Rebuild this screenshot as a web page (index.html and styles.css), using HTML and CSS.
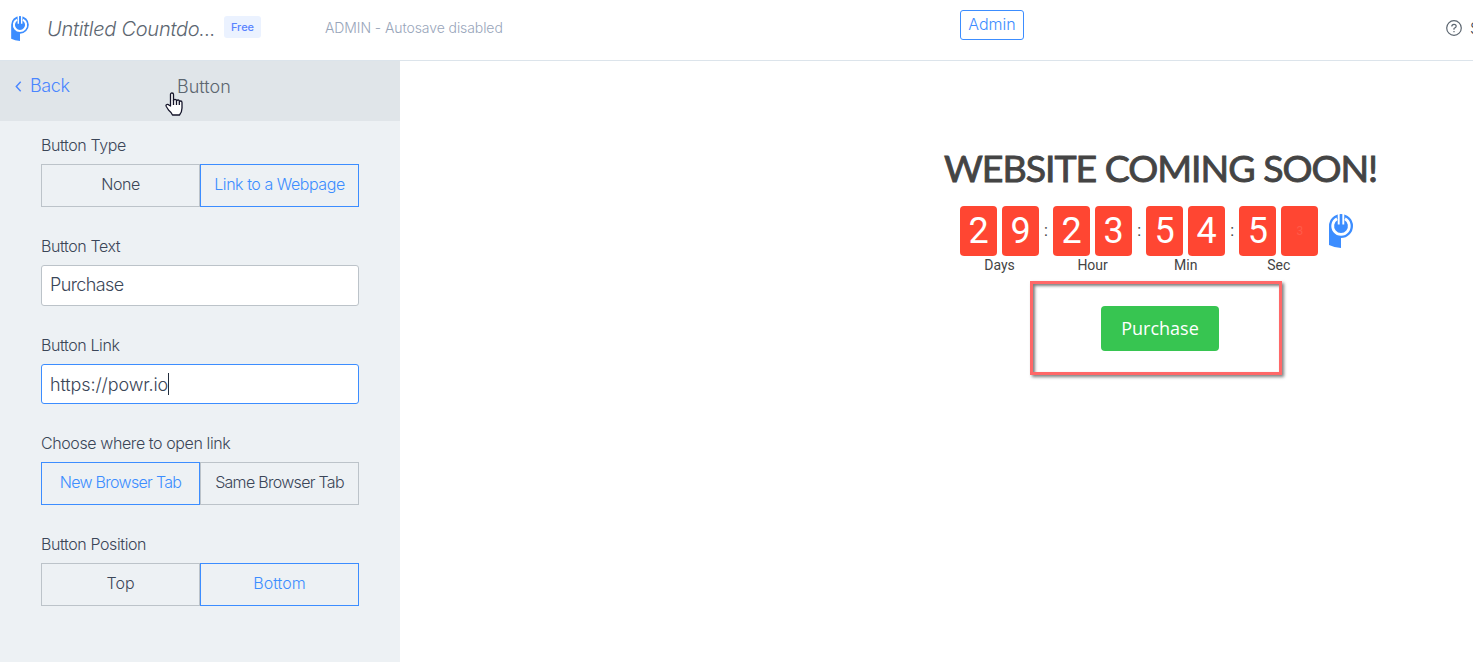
FILE: index.html
```html
<!DOCTYPE html>
<html lang="en">
<head>
    <meta charset="UTF-8">
    <meta name="viewport" content="width=device-width, initial-scale=1.0">
    <title>Countdown Timer Editor</title>
    <link rel="stylesheet" href="styles.css">
</head>
<body>
    <!-- Top bar -->
    <header class="topbar">
        <svg class="logo" viewBox="0 0 24 34">
            <path d="M0 12A12 12 0 1 1 12 24V34Q5 33.500 0 31Z" fill="#3c8dff"/>
            <path d="M8 4.800A8.300 8.300 0 1 0 16 4.800" fill="none" stroke="#fff" stroke-width="2.800"/>
            <path d="M9.700 0V10.500M14.300 0V10.500" stroke="#fff" stroke-width="1.900"/>
        </svg>
        <span class="app-name">Untitled Countdo...</span>
        <span class="plan">Free</span>
        <span class="autosave">ADMIN - Autosave disabled</span>
        <a class="admin-btn" href="#">Admin</a>
        <a class="support" href="#">
            <svg viewBox="0 0 16 16" fill="none" stroke="#5c6670" stroke-width="1.200">
                <circle cx="8" cy="8" r="7.300"/>
                <path d="M5.800 6.400Q5.800 4.300 8 4.300T10.200 6.300Q10.200 7.400 8 8.500V9.700M8 11V12.300"/>
            </svg>
            <span>S</span>
        </a>
    </header>

    <div class="editor">
        <!-- Settings panel -->
        <aside class="panel">
            <div class="panel-header">
                <a class="back" href="#">
                    <svg viewBox="0 0 6 10"><path d="M5 .7L1 5L5 9.300" fill="none" stroke="#4a86ff" stroke-width="1.300"/></svg>
                    <span>Back</span>
                </a>
                <span class="panel-title">Button</span>
                <svg class="pointer" viewBox="0 0 18 24" fill="#fff" stroke="#15152a" stroke-width="1.300" stroke-linejoin="round">
                    <path d="M5.500 14V2.500Q5.500 1 7 1T8.500 2.500V8.500Q8.500 7.300 10 7.300T11.500 9Q11.500 8 13 8T14.300 9.700Q14.500 9 15.700 9T17 10.500V16Q17 20 14.500 23H7.500Q6 20 3.500 18L1.300 14.500Q.5 13 1.800 12.500T4.200 13.200Z"/>
                    <path d="M8.500 8V13M11.500 9V13M14.300 10V13" fill="none"/>
                </svg>
            </div>

            <form class="fields">
                <div class="field">
                    <label>Button Type</label>
                    <div class="toggle">
                        <span class="option">None</span>
                        <span class="option active">Link to a Webpage</span>
                    </div>
                </div>
                <div class="field">
                    <label>Button Text</label>
                    <div class="text-input">Purchase</div>
                </div>
                <div class="field">
                    <label>Button Link</label>
                    <div class="text-input focused">https://powr.io<i class="caret"></i></div>
                </div>
                <div class="field">
                    <label>Choose where to open link</label>
                    <div class="toggle narrow">
                        <span class="option active">New Browser Tab</span>
                        <span class="option">Same Browser Tab</span>
                    </div>
                </div>
                <div class="field">
                    <label>Button Position</label>
                    <div class="toggle wide">
                        <span class="option">Top</span>
                        <span class="option active">Bottom</span>
                    </div>
                </div>
            </form>
        </aside>

        <!-- Countdown preview -->
        <main class="preview">
            <h1>WEBSITE COMING SOON!</h1>
            <div class="countdown">
                <div class="unit">
                    <div class="digits"><b>2</b><b>9</b></div>
                    <span>Days</span>
                </div>
                <i class="colon">:</i>
                <div class="unit">
                    <div class="digits"><b>2</b><b>3</b></div>
                    <span>Hour</span>
                </div>
                <i class="colon">:</i>
                <div class="unit">
                    <div class="digits"><b>5</b><b>4</b></div>
                    <span>Min</span>
                </div>
                <i class="colon">:</i>
                <div class="unit">
                    <div class="digits"><b>5</b><b class="flipping">3</b></div>
                    <span>Sec</span>
                </div>
                <svg class="badge" viewBox="0 0 24 34">
                    <path d="M0 12A12 12 0 1 1 12 24V34Q5 33.500 0 31Z" fill="#3c8dff"/>
                    <path d="M8 4.800A8.300 8.300 0 1 0 16 4.800" fill="none" stroke="#fff" stroke-width="2.800"/>
                    <path d="M9.700 0V10.500M14.300 0V10.500" stroke="#fff" stroke-width="1.900"/>
                </svg>
            </div>
            <div class="highlight">
                <a class="purchase" href="#">Purchase</a>
            </div>
        </main>
    </div>
</body>
</html>
```
FILE: styles.css
```css
* {
    box-sizing: border-box;
}

body {
    margin: 0;
    height: 662px;
    overflow: hidden;
    background-color: #fff;
    font-family: Inter, "Liberation Sans", sans-serif;
    font-weight: 300;
    color: #3b4658;
}

a {
    color: #3c8dff;
    text-decoration: none;
}

svg {
    display: block;
    flex: none;
}

/* Top bar */
.topbar {
    display: flex;
    align-items: flex-start;
    height: 61px;
    padding-left: 11px;
    border-bottom: 1px solid #dce4eb;
    overflow: hidden;
    white-space: nowrap;
}

.topbar > * {
    flex: none;
}

.logo {
    width: 18px;
    height: 25px;
    margin-top: 16px;
}

.app-name {
    width: 177px;
    margin-left: 18px;
    font-size: 20px;
    line-height: 24px;
    margin-top: 17px;
    font-style: italic;
    letter-spacing: -0.260px;
    color: #5c6670;
}

.plan {
    width: 37px;
    height: 22px;
    margin-top: 16px;
    border-radius: 3px;
    background-color: #ebf2ff;
    color: #5a84ff;
    font-size: 11px;
    font-weight: 500;
    line-height: 22px;
    text-align: center;
}

.autosave {
    width: 635px;
    margin: 18px 0 0 64px;
    font-size: 14px;
    line-height: 20px;
    letter-spacing: -0.080px;
    color: #98a5ba;
}

.admin-btn {
    width: 64px;
    height: 30px;
    margin-top: 10px;
    border: 1px solid #3c8dff;
    border-radius: 3px;
    font-size: 16px;
    line-height: 27px;
    text-align: center;
}

.support {
    display: flex;
    gap: 8px;
    margin: 20px 0 0 422px;
    font-size: 16px;
    line-height: 16px;
    color: #3b4658;
}

.support svg {
    width: 16px;
    height: 16px;
}

.editor {
    display: flex;
    height: 601px;
}

/* Settings panel */
.panel {
    width: 400px;
    background-color: #edf1f4;
}

.panel-header {
    position: relative;
    display: flex;
    height: 60px;
    padding: 14px 0 0 15px;
    background-color: #e0e5e9;
    font-size: 18px;
    line-height: 24px;
}

.back {
    display: flex;
    align-items: center;
    gap: 8px;
    width: 162px;
    height: 24px;
    color: #4a86ff;
    margin-top: -1px;
    letter-spacing: -0.400px;
}

.back svg {
    width: 7px;
    height: 11px;
    margin-top: 1px;
}

.panel-title {
    color: #5c6670;
}

.pointer {
    position: absolute;
    left: 165px;
    top: 31px;
    width: 18px;
    height: 24px;
}

.fields {
    padding: 15px 41px 0;
}

.field {
    margin-bottom: 30px;
}

.field label {
    display: block;
    margin-bottom: 9px;
    font-size: 16px;
    line-height: 19px;
    letter-spacing: -0.400px;
}

.toggle {
    display: flex;
    letter-spacing: -0.450px;
}

.toggle.narrow {
    letter-spacing: -0.700px;
}

.toggle.wide {
    letter-spacing: 0;
}

.option {
    flex: 1;
    height: 43px;
    border: 1px solid #bcc3c9;
    font-size: 16px;
    line-height: 39px;
    text-align: center;
    white-space: nowrap;
}

.option.active {
    border-color: #3c8dff;
    color: #3c8dff;
}

.text-input {
    display: flex;
    align-items: center;
    height: 41px;
    padding: 0 0 2px 8px;
    border: 1px solid #bcc3c9;
    border-radius: 3px;
    background-color: #fff;
    font-size: 18px;
    letter-spacing: -0.600px;
}

.text-input.focused {
    height: 40px;
    padding-bottom: 0;
    border-color: #3c8dff;
    letter-spacing: -0.120px;
}

.caret {
    width: 1px;
    height: 22px;
    background-color: #222c3c;
}

/* Countdown preview */
.preview {
    flex: 1;
    display: flex;
    flex-direction: column;
    align-items: flex-start;
    padding: 82px 0 0 544px;
}

h1 {
    margin: 0;
    font-family: Lato, sans-serif;
    font-size: 37.500px;
    font-weight: 400;
    line-height: 50px;
    letter-spacing: -1.020px;
    color: #444;
    -webkit-text-stroke: 0.900px #444;
    white-space: nowrap;
}

.countdown {
    display: flex;
    margin: 13px 0 0 16px;
    font-family: Roboto, sans-serif;
    font-weight: 400;
    color: #444;
}

.unit {
    width: 79px;
    font-size: 14px;
    line-height: 18px;
    text-align: center;
}

.digits {
    display: flex;
    gap: 5px;
}

.digits b {
    width: 37px;
    height: 50px;
    border-radius: 4px;
    background-color: #ff4632;
    color: #fff;
    font-size: 36px;
    font-weight: 400;
    line-height: 50px;
}

.digits .flipping {
    color: #ff5a48;
    font-size: 12px;
}

.colon {
    width: 14.100px;
    font-size: 16px;
    font-style: normal;
    line-height: 50px;
    text-align: center;
}

.badge {
    width: 24px;
    height: 34px;
    margin: 8px 0 0 11px;
}

.highlight {
    display: flex;
    align-items: flex-start;
    width: 252px;
    height: 94px;
    margin: 7px 0 0 86px;
    padding: 22px 0 0 68px;
    border: 3px solid #ff6868;
    box-shadow: 2px 2px 3px rgba(0, 0, 0, 0.5), inset 2px 2px 3px rgba(0, 0, 0, 0.5);
}

.purchase {
    width: 118px;
    height: 45px;
    border-radius: 4px;
    background-color: #37c551;
    color: #fff;
    font-family: "Open Sans", sans-serif;
    font-size: 18px;
    font-weight: 400;
    line-height: 45px;
    text-align: center;
}
```
